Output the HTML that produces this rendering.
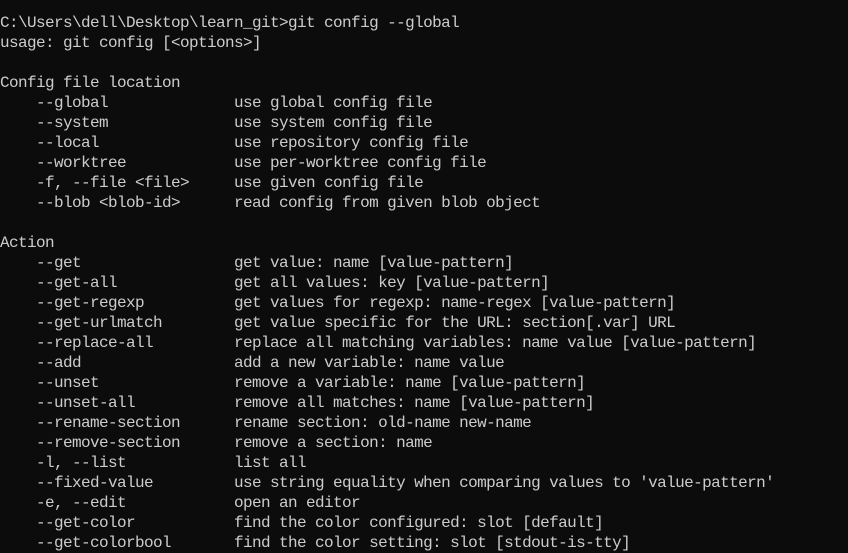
<!DOCTYPE html>
<html><head><style>
html,body{margin:0;padding:0;background:#0c0c0c;width:848px;height:553px;overflow:hidden}
pre{margin:0;padding:13px 0 0 0;font-family:"Liberation Mono",monospace;font-size:16px;letter-spacing:-0.6px;line-height:20px;color:#cccccc}
</style></head><body><pre>C:\Users\dell\Desktop\learn_git>git config --global
usage: git config [&lt;options&gt;]

Config file location
    --global              use global config file
    --system              use system config file
    --local               use repository config file
    --worktree            use per-worktree config file
    -f, --file &lt;file&gt;     use given config file
    --blob &lt;blob-id&gt;      read config from given blob object

Action
    --get                 get value: name [value-pattern]
    --get-all             get all values: key [value-pattern]
    --get-regexp          get values for regexp: name-regex [value-pattern]
    --get-urlmatch        get value specific for the URL: section[.var] URL
    --replace-all         replace all matching variables: name value [value-pattern]
    --add                 add a new variable: name value
    --unset               remove a variable: name [value-pattern]
    --unset-all           remove all matches: name [value-pattern]
    --rename-section      rename section: old-name new-name
    --remove-section      remove a section: name
    -l, --list            list all
    --fixed-value         use string equality when comparing values to 'value-pattern'
    -e, --edit            open an editor
    --get-color           find the color configured: slot [default]
    --get-colorbool       find the color setting: slot [stdout-is-tty]
</pre></body></html>
